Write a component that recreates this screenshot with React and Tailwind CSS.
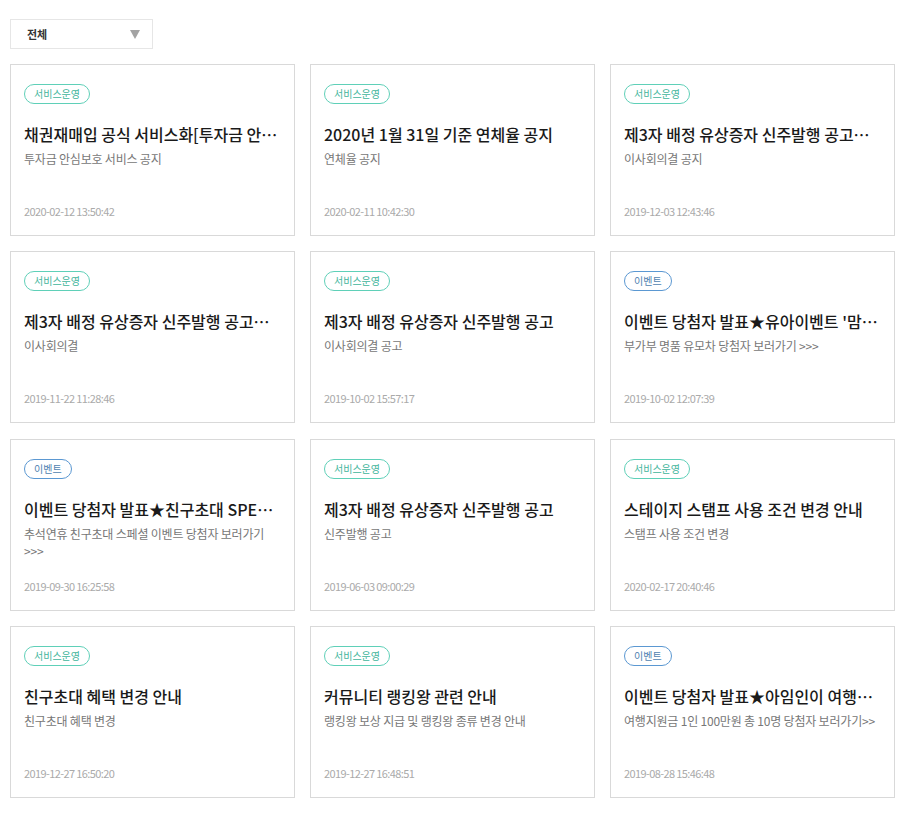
import React from 'react';

const SERVICE = '서비스운영';
const EVENT = '이벤트';

const posts = [
    { tag: SERVICE, title: '채권재매입 공식 서비스화[투자금 안심보호 서비스 공지]', desc: '투자금 안심보호 서비스 공지', date: '2020-02-12 13:50:42' },
    { tag: SERVICE, title: '2020년 1월 31일 기준 연체율 공지', desc: '연체율 공지', date: '2020-02-11 10:42:30' },
    { tag: SERVICE, title: '제3자 배정 유상증자 신주발행 공고문(이사회의결)', desc: '이사회의결 공지', date: '2019-12-03 12:43:46' },
    { tag: SERVICE, title: '제3자 배정 유상증자 신주발행 공고문(이사회의결)', desc: '이사회의결', date: '2019-11-22 11:28:46' },
    { tag: SERVICE, title: '제3자 배정 유상증자 신주발행 공고', desc: '이사회의결 공고', date: '2019-10-02 15:57:17' },
    { tag: EVENT, title: "이벤트 당첨자 발표★유아이벤트 '맘스 다이어리'", desc: '부가부 명품 유모차 당첨자 보러가기 >>>', date: '2019-10-02 12:07:39' },
    { tag: EVENT, title: '이벤트 당첨자 발표★친구초대 SPECIAL EVENT', desc: '추석연휴 친구초대 스페셜 이벤트 당첨자 보러가기 >>>', date: '2019-09-30 16:25:58' },
    { tag: SERVICE, title: '제3자 배정 유상증자 신주발행 공고', desc: '신주발행 공고', date: '2019-06-03 09:00:29' },
    { tag: SERVICE, title: '스테이지 스탬프 사용 조건 변경 안내', desc: '스탬프 사용 조건 변경', date: '2020-02-17 20:40:46' },
    { tag: SERVICE, title: '친구초대 혜택 변경 안내', desc: '친구초대 혜택 변경', date: '2019-12-27 16:50:20' },
    { tag: SERVICE, title: '커뮤니티 랭킹왕 관련 안내', desc: '랭킹왕 보상 지급 및 랭킹왕 종류 변경 안내', date: '2019-12-27 16:48:51' },
    { tag: EVENT, title: '이벤트 당첨자 발표★아임인이 여행지원금 이벤트', desc: '여행지원금 1인 100만원 총 10명 당첨자 보러가기>>', date: '2019-08-28 15:46:48' },
];

const Badge = ({ tag }) => (
    <span
        className={`inline-flex items-center h-[20px] px-[9px] rounded-full border text-[10px] leading-none ${tag === EVENT
            ? 'border-[#5b98d2] text-[#4f7fb0]'
            : 'border-[#5fd0b8] text-[#3fb59c]'
            }`}
    >
        {tag}
    </span>
);

const App = () => {
    return (
        <div className="min-h-screen bg-white font-['Noto_Sans_CJK_KR','Noto_Sans',sans-serif] pl-[10px] pt-[19px] pb-10">
            {/* Filter */}
            <div className="w-[143px] h-[30px] border border-[#e6e6e6] flex items-center justify-between pl-[16px] pr-[12px]">
                <span className="text-[11px] font-bold text-[#333]">전체</span>
                <span className="w-0 h-0 border-l-[5px] border-r-[5px] border-t-[9px] border-l-transparent border-r-transparent border-t-[#a3a3a3]" />
            </div>

            {/* Cards */}
            <div className="mt-[15px] grid grid-cols-[repeat(3,285px)] gap-x-[15px] gap-y-[15.34px]">
                {posts.map((p, i) => (
                    <div
                        key={i}
                        className="h-[172px] border border-[#d9d9d9] flex flex-col pt-[19px] pb-[16px] pl-[13px] pr-[14px]"
                    >
                        <div className="flex">
                            <Badge tag={p.tag} />
                        </div>
                        <h3 className="mt-[18px] text-[16px] leading-[24px] font-medium text-[#1a1a1a] truncate">
                            {p.title}
                        </h3>
                        <p className="mt-[4px] text-[12px] leading-[17px] tracking-[-0.2px] text-[#777]">
                            {p.desc}
                        </p>
                        <p className="mt-auto text-[11px] leading-[16px] tracking-[-0.6px] text-[#aaa]">
                            {p.date}
                        </p>
                    </div>
                ))}
            </div>
        </div>
    );
};

export default App;
